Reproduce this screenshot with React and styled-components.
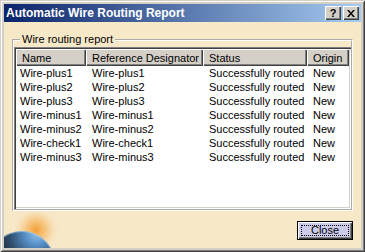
import React from 'react'
import styled, { createGlobalStyle } from 'styled-components'

const GlobalStyle = createGlobalStyle`
  html, body {
    margin: 0;
    padding: 0;
    background: #ffffff;
  }
  body {
    font-family: "Liberation Sans", Arial, sans-serif;
    font-size: 11px;
    color: #000;
  }
`

const Window = styled.div`
  width: 365px;
  height: 252px;
  box-sizing: border-box;
  padding: 4px;
  display: flex;
  flex-direction: column;
  background: #d4d0c8;
  box-shadow: inset 1px 1px #d4d0c8, inset -1px -1px #404040, inset 2px 2px #ffffff,
    inset -2px -2px #808080;
`

const TitleBar = styled.div`
  flex: none;
  height: 18px;
  display: flex;
  align-items: center;
  padding: 0 2px;
  background: linear-gradient(to right, #0a246a, #a6caf0);
`

const Title = styled.div`
  flex: 1;
  color: #fff;
  font-weight: bold;
  font-size: 12px;
  line-height: 18px;
  white-space: nowrap;
`

const CaptionButtons = styled.div`
  display: flex;
  gap: 2px;
`

const CaptionButton = styled.div`
  width: 16px;
  height: 14px;
  box-sizing: border-box;
  display: flex;
  align-items: center;
  justify-content: center;
  background: #d4d0c8;
  box-shadow: inset 1px 1px #ffffff, inset -1px -1px #404040, inset -2px -2px #808080;
  font-weight: bold;
  font-size: 11px;
  line-height: 14px;
  color: #000;
`

const Body = styled.div`
  flex: 1;
  position: relative;
  display: flex;
  flex-direction: column;
  padding: 0 8px 8px;
  background: #f7e8c8;
  overflow: hidden;
`

const Globe = styled.svg`
  position: absolute;
  left: 0;
  bottom: 0;
`

const GroupBox = styled.fieldset`
  position: relative;
  margin: 11px 0 0;
  padding: 1px 0 0;
  min-width: 0;
  border: 2px groove #ffffff;
`

const Legend = styled.legend`
  margin-left: 6px;
  padding: 0 2px;
  line-height: 13px;
  font-size: 11px;
`

const ListBox = styled.div`
  height: 162px;
  box-sizing: border-box;
  padding: 2px;
  background: #ffffff;
  box-shadow: inset 1px 1px #808080, inset 2px 2px #404040, inset -1px -1px #ffffff,
    inset -2px -2px #d4d0c8;
`

const Row = styled.div`
  display: grid;
  grid-template-columns: 70px 117px 104px 42px;
`

const HeaderCell = styled.div`
  height: 17px;
  box-sizing: border-box;
  padding: 3px 0 0 6px;
  line-height: 13px;
  white-space: nowrap;
  overflow: hidden;
  background: #d4d0c8;
  box-shadow: inset 1px 1px #ffffff, inset -1px -1px #404040, inset -2px -2px #808080;
`

const Cell = styled.div`
  height: 14px;
  line-height: 14px;
  padding-left: ${(p) => (p.$first ? 4 : 6)}px;
  white-space: nowrap;
  overflow: hidden;
`

const Footer = styled.div`
  position: relative;
  display: flex;
  justify-content: flex-end;
  margin-top: 10px;
`

const CloseButton = styled.button`
  width: 56px;
  height: 19px;
  box-sizing: border-box;
  display: flex;
  padding: 3px;
  border: 1px solid #000;
  background: #cccbea;
  box-shadow: inset 1px 1px #ffffff, inset -1px -1px #404040, inset -2px -2px #808080;
  font-family: "Liberation Sans", Arial, sans-serif;
  font-size: 11px;
  color: #000;
`

const FocusRing = styled.span`
  flex: 1;
  display: flex;
  align-items: center;
  justify-content: center;
  border: 1px dotted #000;
  line-height: 11px;
`

const columns = ['Name', 'Reference Designator', 'Status', 'Origin']

const wires = [
  'Wire-plus1',
  'Wire-plus2',
  'Wire-plus3',
  'Wire-minus1',
  'Wire-minus2',
  'Wire-check1',
  'Wire-minus3',
]

export default function App() {
  return (
    <>
      <GlobalStyle />
      <Window>
        <TitleBar>
          <Title>Automatic Wire Routing Report</Title>
          <CaptionButtons>
            <CaptionButton>?</CaptionButton>
            <CaptionButton>
              <svg width="8" height="7" viewBox="0 0 8 7">
                <path d="M0 0h2l2 2.5L6 0h2L5 3.5 8 7H6L4 4.5 2 7H0l3-3.5z" fill="#000" />
              </svg>
            </CaptionButton>
          </CaptionButtons>
        </TitleBar>
        <Body>
          <Globe width="60" height="36" viewBox="0 0 60 36">
            <defs>
              <radialGradient id="glow" cx="32" cy="18" r="24" gradientUnits="userSpaceOnUse">
                <stop offset="0" stopColor="#f39a2c" stopOpacity="0.95" />
                <stop offset="0.45" stopColor="#f6b45c" stopOpacity="0.6" />
                <stop offset="1" stopColor="#f7e8c8" stopOpacity="0" />
              </radialGradient>
              <radialGradient
                id="earth"
                cx="30"
                cy="24"
                r="40"
                fx="34"
                fy="20"
                gradientUnits="userSpaceOnUse"
              >
                <stop offset="0" stopColor="#9cc8ee" />
                <stop offset="0.3" stopColor="#558ec6" />
                <stop offset="0.65" stopColor="#2e4c6a" />
                <stop offset="1" stopColor="#1a2430" />
              </radialGradient>
            </defs>
            <circle cx="32" cy="18" r="24" fill="url(#glow)" />
            <circle cx="18" cy="52" r="33" fill="url(#earth)" />
            <circle cx="18" cy="52" r="32.5" fill="none" stroke="#b4d8f4" strokeOpacity="0.6" />
          </Globe>
          <GroupBox>
            <Legend>Wire routing report</Legend>
            <ListBox>
              <Row>
                {columns.map((c) => (
                  <HeaderCell key={c}>{c}</HeaderCell>
                ))}
              </Row>
              {wires.map((w) => (
                <Row key={w}>
                  <Cell $first>{w}</Cell>
                  <Cell>{w}</Cell>
                  <Cell>Successfully routed</Cell>
                  <Cell>New</Cell>
                </Row>
              ))}
            </ListBox>
          </GroupBox>
          <Footer>
            <CloseButton>
              <FocusRing>Close</FocusRing>
            </CloseButton>
          </Footer>
        </Body>
      </Window>
    </>
  )
}
